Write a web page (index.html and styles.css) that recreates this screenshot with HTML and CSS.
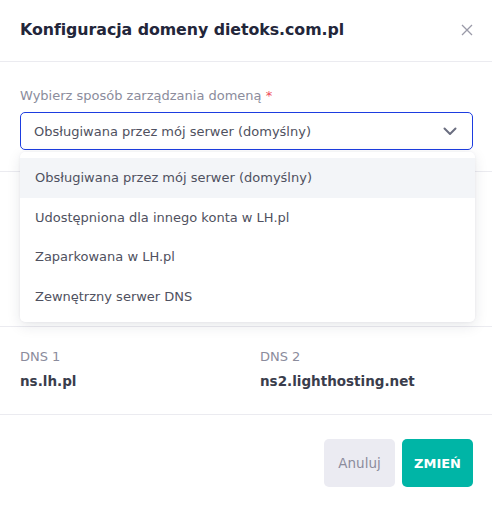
FILE: index.html
```html
<!DOCTYPE html>
<html lang="pl">
<head>
<meta charset="utf-8">
<link rel="stylesheet" href="styles.css">
</head>
<body>
<div class="modal">
  <header class="modal-header">
    <h1 class="title">Konfiguracja domeny dietoks.com.pl</h1>
    <button class="close" aria-label="Zamknij">
      <svg width="12" height="12" viewBox="0 0 12 12"><path d="M1 1L11 11M11 1L1 11" stroke="#9a9aa8" stroke-width="1.3" fill="none"/></svg>
    </button>
  </header>
  <section class="field-section">
    <label class="label">Wybierz sposób zarządzania domeną <span class="req">*</span></label>
    <div class="select-wrap">
      <div class="select">
        <span>Obsługiwana przez mój serwer (domyślny)</span>
        <svg class="chev" width="14" height="9" viewBox="0 0 14 9"><path d="M1.5 1.5L7 7L12.5 1.5" stroke="#6b6e80" stroke-width="2" fill="none" stroke-linecap="round" stroke-linejoin="round"/></svg>
      </div>
      <ul class="menu">
        <li class="item active">Obsługiwana przez mój serwer (domyślny)</li>
        <li class="item">Udostępniona dla innego konta w LH.pl</li>
        <li class="item">Zaparkowana w LH.pl</li>
        <li class="item">Zewnętrzny serwer DNS</li>
      </ul>
    </div>
  </section>
  <section class="hidden-section"></section>
  <section class="dns">
    <div class="dns-col">
      <div class="dns-label">DNS 1</div>
      <div class="dns-value">ns.lh.pl</div>
    </div>
    <div class="dns-col">
      <div class="dns-label">DNS 2</div>
      <div class="dns-value">ns2.lighthosting.net</div>
    </div>
  </section>
  <footer class="footer">
    <button class="btn btn-cancel">Anuluj</button>
    <button class="btn btn-ok">ZMIEŃ</button>
  </footer>
</div>
</body>
</html>
```
FILE: styles.css
```css
* { box-sizing: border-box; }
html, body { margin: 0; padding: 0; background: #fff; }
body { font-family: "DejaVu Sans", sans-serif; color: #2b2e3d; width: 492px; height: 506px; overflow: hidden; }
.modal { width: 492px; }
.modal-header {
  height: 62px; border-bottom: 1px solid #ebebf0;
  display: flex; align-items: center; justify-content: space-between;
  padding: 0 18px 0 20px;
}
.title { margin: 0; font-size: 15.8px; font-weight: 700; color: #23263a; letter-spacing: -0.05px; position: relative; top: -1px; }
.close { border: 0; background: none; padding: 0; width: 14px; height: 14px; display: flex; align-items: center; justify-content: center; position: relative; top: -1px; }
.field-section { height: 110px; padding: 26px 19px 0 20px; border-bottom: 1px solid #ebebf0; }
.label { display: block; font-size: 13px; color: #8b8c9c; margin-bottom: 8px; line-height: 16px; }
.req { color: #ef4b5a; }
.select-wrap { position: relative; }
.select {
  height: 38px; border: 1px solid #1d3de0; border-radius: 5px;
  display: flex; align-items: center; justify-content: space-between;
  padding: 0 15px 0 13px; font-size: 13px; color: #4f5160;
  background: #fff;
}
.chev { margin-top: 1px; }
.menu {
  position: absolute; left: 0; right: -2px; top: 40px; z-index: 5;
  margin: 0; padding: 6px 0 6px; list-style: none; background: #fff;
  border-radius: 5px;
  box-shadow: 0 4px 14px rgba(30, 35, 60, 0.10), 0 0 3px rgba(30,35,60,0.06);
}
.item { height: 39.5px; display: flex; align-items: center; padding-left: 15px; font-size: 13px; color: #4f5160; }
.item.active { background: #f3f5f8; }
.hidden-section { height: 155px; border-bottom: 1px solid #ebebf0; }
.dns { display: grid; grid-template-columns: 240px 1fr; padding: 22px 20px 0; height: 88px; border-bottom: 1px solid #ebebf0; }
.dns-label { font-size: 13px; color: #8b8c9c; line-height: 16px; }
.dns-value { font-size: 13.5px; font-weight: 700; color: #3a3d4c; margin-top: 8px; }
.footer { display: flex; justify-content: flex-end; gap: 7px; padding: 24px 19px 0 20px; }
.btn { height: 48px; width: 71px; border: 0; border-radius: 5px; font-family: inherit; font-size: 13px; padding: 0; }
.btn-cancel { background: #ebebf2; color: #8b8c9c; font-size: 13.5px; }
.btn-ok { background: #00b5a6; color: #fff; font-weight: 700; }
```
